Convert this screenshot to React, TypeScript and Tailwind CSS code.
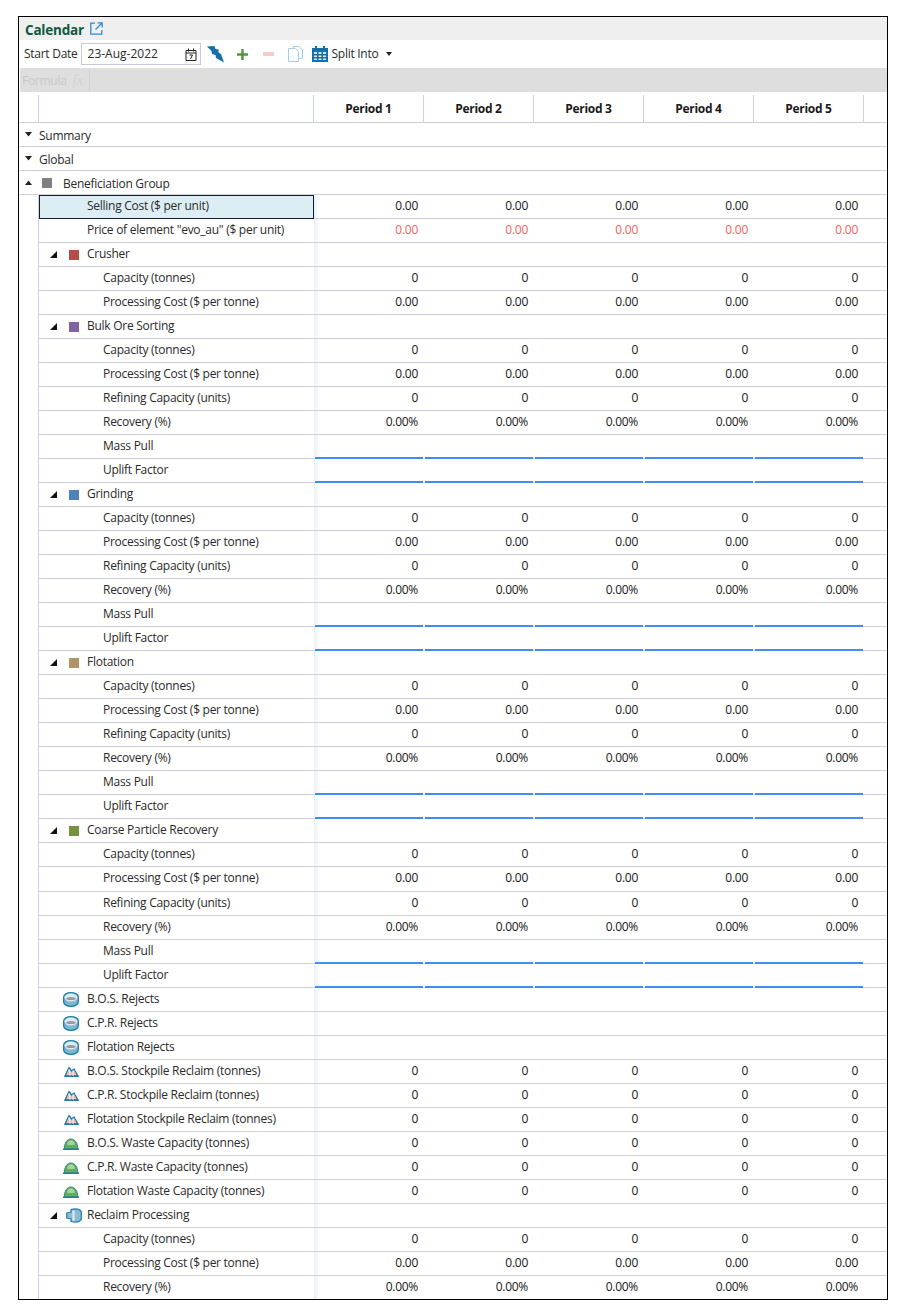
import React from "react";

type R = {
  label: string;
  kind: "top" | "group" | "param" | "item";
  icon?: React.ReactNode;
  v?: string;
  red?: boolean;
  blue?: boolean;
  selected?: boolean;
  tall?: boolean;
};

const Square = ({ c }: { c: string }) => <span className="block w-[10px] h-[10px]" style={{ backgroundColor: c }} />;

const Corner = () => (
  <svg width="7" height="7" viewBox="0 0 7 7"><path d="M7 0V7H0Z" fill="#111" /></svg>
);
const Down = () => (
  <svg width="7" height="5" viewBox="0 0 7 5"><path d="M0 0H7L3.5 4.5Z" fill="#222" /></svg>
);
const Up = () => (
  <svg width="7" height="5" viewBox="0 0 7 5"><path d="M0 5H7L3.5 .5Z" fill="#222" /></svg>
);

const Disc = () => (
  <svg width="16" height="15" viewBox="0 0 16 15">
    <path d="M.7 5C.7 2.500 4 .7 8 .7S15.300 2.500 15.300 5V10C15.300 12.500 12 14.300 8 14.300S.7 12.500.7 10Z" fill="#7fb6d2" stroke="#1f7aa5" strokeWidth="1.300" />
    <ellipse cx="8" cy="5.500" rx="6.500" ry="4" fill="#dcecf3" />
    <ellipse cx="8" cy="6.500" rx="4.800" ry="1.600" fill="#9a9a9a" />
  </svg>
);
const Stock = () => (
  <svg width="15" height="11" viewBox="0 0 15 11">
    <path d="M1 10 5 1.500 7.500 5 10 3 14 10Z" fill="#f0b4b4" stroke="#1f7aa5" strokeWidth="1.300" strokeLinejoin="round" />
    <path d="M5 3.500 6.200 10M9.500 4.500 9 10" stroke="#dfeef5" strokeWidth="1.500" />
    <path d="M.3 10.300H14.700" stroke="#1f7aa5" strokeWidth="1.300" />
  </svg>
);
const Waste = () => (
  <svg width="16" height="12" viewBox="0 0 16 12">
    <path d="M1.200 11C1.500 5 4 1 8 1s6.500 4 6.800 10Z" fill="#62ab58" stroke="#2f8a7a" />
    <path d="M3.800 6.500C5 3 6.500 2.200 8 2.200S11 3 12.200 6.500C10 7.500 6 7.500 3.800 6.500Z" fill="#a9d39c" />
    <path d="M0 11.300H16" stroke="#1f7aa5" strokeWidth="1.400" />
  </svg>
);
const Reclaim = () => (
  <svg width="16" height="15" viewBox="0 0 16 15">
    <path d="M.7 5 5 4V1.500C9 .5 13.500 1 15.300 3.500V11.500C13.500 14 9 14.500 5 13.500V11L.7 10Z" fill="#8dbbd6" stroke="#1f7aa5" strokeWidth="1.200" strokeLinejoin="round" />
    <path d="M7.500 2.500V12.500" stroke="#dcecf3" strokeWidth="2.200" />
  </svg>
);

const sq = (c: string) => <Square c={c} />;

const full = (): R[] => [
  { label: "Capacity (tonnes)", kind: "param", v: "0" },
  { label: "Processing Cost ($ per tonne)", kind: "param", v: "0.00" },
  { label: "Refining Capacity (units)", kind: "param", v: "0" },
  { label: "Recovery (%)", kind: "param", v: "0.00%" },
  { label: "Mass Pull", kind: "param", blue: true },
  { label: "Uplift Factor", kind: "param", blue: true },
];

const coarse = full();
coarse[1] = { ...coarse[1], tall: true };

const rows: R[] = [
  { label: "Summary", kind: "top", icon: <Down /> },
  { label: "Global", kind: "top", icon: <Down /> },
  { label: "Beneficiation Group", kind: "top", icon: <Up /> },
  { label: "Selling Cost ($ per unit)", kind: "item", v: "0.00", selected: true },
  { label: 'Price of element "evo_au" ($ per unit)', kind: "item", v: "0.00", red: true },
  { label: "Crusher", kind: "group", icon: sq("#b94a48") },
  { label: "Capacity (tonnes)", kind: "param", v: "0" },
  { label: "Processing Cost ($ per tonne)", kind: "param", v: "0.00" },
  { label: "Bulk Ore Sorting", kind: "group", icon: sq("#8064a2") },
  ...full(),
  { label: "Grinding", kind: "group", icon: sq("#4f81bd") },
  ...full(),
  { label: "Flotation", kind: "group", icon: sq("#b09468") },
  ...full(),
  { label: "Coarse Particle Recovery", kind: "group", icon: sq("#76923c") },
  ...coarse,
  { label: "B.O.S. Rejects", kind: "item", icon: <Disc /> },
  { label: "C.P.R. Rejects", kind: "item", icon: <Disc /> },
  { label: "Flotation Rejects", kind: "item", icon: <Disc /> },
  { label: "B.O.S. Stockpile Reclaim (tonnes)", kind: "item", icon: <Stock />, v: "0" },
  { label: "C.P.R. Stockpile Reclaim (tonnes)", kind: "item", icon: <Stock />, v: "0" },
  { label: "Flotation Stockpile Reclaim (tonnes)", kind: "item", icon: <Stock />, v: "0" },
  { label: "B.O.S. Waste Capacity (tonnes)", kind: "item", icon: <Waste />, v: "0" },
  { label: "C.P.R. Waste Capacity (tonnes)", kind: "item", icon: <Waste />, v: "0" },
  { label: "Flotation Waste Capacity (tonnes)", kind: "item", icon: <Waste />, v: "0" },
  { label: "Reclaim Processing", kind: "group", icon: <Reclaim /> },
  { label: "Capacity (tonnes)", kind: "param", v: "0" },
  { label: "Processing Cost ($ per tonne)", kind: "param", v: "0.00" },
  { label: "Recovery (%)", kind: "param", v: "0.00%" },
];

const periods = [1, 2, 3, 4, 5];

function TopRow({ r }: { r: R }) {
  const isGroup = r.label === "Beneficiation Group";
  return (
    <div className="flex items-center h-6 shrink-0 border-b border-[#d0d0e2]">
      <span className="w-5 pl-[6px] flex items-center">{r.icon}</span>
      {isGroup ? (
        <>
          <span className="ml-[3px] w-[21px]"><Square c="#808080" /></span>
          <span className="pt-[2px]">{r.label}</span>
        </>
      ) : (
        <span className="pt-[2px]">{r.label}</span>
      )}
    </div>
  );
}

function BodyRow({ r }: { r: R }) {
  const h = r.tall ? "h-[25px]" : "h-6";
  return (
    <div className={`flex shrink-0 ${h}`}>
      <div className="w-5 shrink-0 border-r border-[#d0d0e2]" />
      <div className="flex flex-1 border-b border-[#d0d0e2]">
        <div
          className={
            r.selected
              ? "w-[275px] shrink-0 flex items-center -mb-px border border-[#16202c] bg-[#dcedf4] pl-[47px] pb-[2px]"
              : `w-[275px] shrink-0 flex items-center pb-[2px] ${r.kind === "param" ? "pl-16" : "pl-12"}`
          }
        >
          {r.kind === "group" && (
            <span className="w-[48px] -ml-[48px] flex items-center pl-[11px] pt-[2px]">
              <Corner />
              <span className="ml-[9px] w-[16px] flex justify-center">{r.icon}</span>
            </span>
          )}
          {r.kind === "item" && r.icon && (
            <span className="w-[48px] -ml-[48px] flex items-center pl-6 pt-[2px]">
              <span className="w-[16px] flex justify-center">{r.icon}</span>
            </span>
          )}
          <span>{r.label}</span>
        </div>
        <div className="flex flex-1 bg-[linear-gradient(to_right,#e2f1fb,#ffffff)] bg-no-repeat bg-[length:5px_100%]">
          {periods.map((p) => (
            <div
              key={p}
              className={`w-[110px] shrink-0 flex items-center justify-end pr-[6px] ${
                r.blue ? "" : "pb-[2px]"
              } ${r.red ? "text-[#f4605f]" : "text-[#151515]"}`}
            >
              {r.blue ? (
                <span className="block w-[108px] h-full -mb-px -mr-[5px] border-b-2 border-[#3f8ef0]" />
              ) : (
                r.v
              )}
            </div>
          ))}
        </div>
      </div>
    </div>
  );
}

export default function App() {
  return (
    <div className="bg-white w-[906px] h-[1312px] pt-4 pl-[18px] text-[12px] text-[#2a2a2a] font-['Open_Sans',sans-serif] tracking-[-0.27px]">
      <div className="w-[870px] h-[1284px] border border-black flex flex-col overflow-hidden">
        <div className="h-[23px] shrink-0 bg-[#efefef] flex items-center pl-[6px]">
          <span className="font-bold text-[13.5px] text-[#0c5a3e] leading-none tracking-[-0.2px] pt-1">Calendar</span>
          <svg className="ml-[6px]" width="13" height="13" viewBox="0 0 13 13" fill="none" stroke="#2a8fd0" strokeWidth="1.300">
            <path d="M5 1.200H.8V12.200H11.800V8" />
            <path d="M7.500 .8H12.200V5.500M12 1 5.500 7.500" />
          </svg>
        </div>
        <div className="h-7 shrink-0 bg-white flex items-center pl-[5px]">
          <span>Start Date</span>
          <div className="ml-[3px] w-[120px] h-[22px] border border-[#c8c8dc] flex items-center pl-[6px] pr-[3px] justify-between">
            <span className="tracking-normal">23-Aug-2022</span>
            <svg width="12" height="13" viewBox="0 0 12 13" fill="none" stroke="#222">
              <path d="M1 2.500H11V12.500H1ZM1 5H11M3.500 .5V3.500M8.500 .5V3.500" />
              <path d="M4.500 7H7.500L5.500 11" />
            </svg>
          </div>
          <svg className="ml-[6px]" width="17" height="17" viewBox="0 0 17 17">
            <path d="M0 .5 7.500 0 8.500 3 11.500 3.500 11.500 6.500 14 8 17 16.500 9 12 8.500 9 5 8 4.500 5Z" fill="#156fa8" />
          </svg>
          <svg className="ml-[13px]" width="11" height="11" viewBox="0 0 11 11"><path d="M4.300 0H6.700V4.300H11V6.700H6.700V11H4.300V6.700H0V4.300H4.300Z" fill="#4c9a3a" /></svg>
          <svg className="ml-[15px]" width="11" height="4" viewBox="0 0 11 4"><path d="M0 0H11V4H0Z" fill="#f3cccc" /></svg>
          <svg className="ml-[14px]" width="15" height="16" viewBox="0 0 15 16" fill="#fff" stroke="#a5cde2">
            <path d="M5 .5H11L14.500 4V12.500H5Z" />
            <path d="M.5 2.500H7.500L10.500 5.500V15.500H.5Z" />
          </svg>
          <svg className="ml-[9px]" width="16" height="16" viewBox="0 0 16 16">
            <path d="M0 2H16V16H0Z" fill="#156fa8" />
            <path d="M3 0H5V3H3ZM11 0H13V3H11Z" fill="#156fa8" />
            <path d="M2 6H5V8H2ZM6.500 6H9.500V8H6.500ZM11 6H14V8H11ZM2 9.500H5V11H2ZM6.500 9.500H9.500V11H6.500ZM11 9.500H14V11H11ZM2 12.500H5V14H2ZM6.500 12.500H9.500V14H6.500ZM11 12.500H14V14H11Z" fill="#d8ecf6" />
          </svg>
          <span className="ml-[4px]">Split Into</span>
          <svg className="ml-[8px]" width="6" height="4" viewBox="0 0 6 4"><path d="M0 0H6L3 4Z" fill="#222" /></svg>
        </div>
        <div className="h-6 shrink-0 ml-px bg-[#dedede] flex items-center pl-[2px]">
          <span className="text-[#c9c9c9] pt-[2px]">Formula</span>
          <span className="ml-[6px] font-['Liberation_Serif',serif] italic text-[15px] text-[#cfd4d6]">fx</span>
          <span className="ml-[6px] h-full border-l border-[#d2d2d2]" />
        </div>
        <div className="h-[3px] shrink-0" />
        <div className="flex h-7 shrink-0 border-b border-[#d0d0e2]">
          <div className="w-5 shrink-0 border-r border-[#d0d0e2]" />
          <div className="w-[275px] shrink-0 border-r border-[#c8d4e4]" />
          {periods.map((p) => (
            <div key={p} className="w-[110px] shrink-0 flex items-center justify-center border-r border-[#d0d0e2] font-bold text-[#1a1a1a] tracking-[-0.3px] bg-white">
              Period {p}
            </div>
          ))}
        </div>
        {rows.map((r, i) =>
          r.kind === "top" ? <TopRow key={i} r={r} /> : <BodyRow key={i} r={r} />
        )}
      </div>
    </div>
  );
}
